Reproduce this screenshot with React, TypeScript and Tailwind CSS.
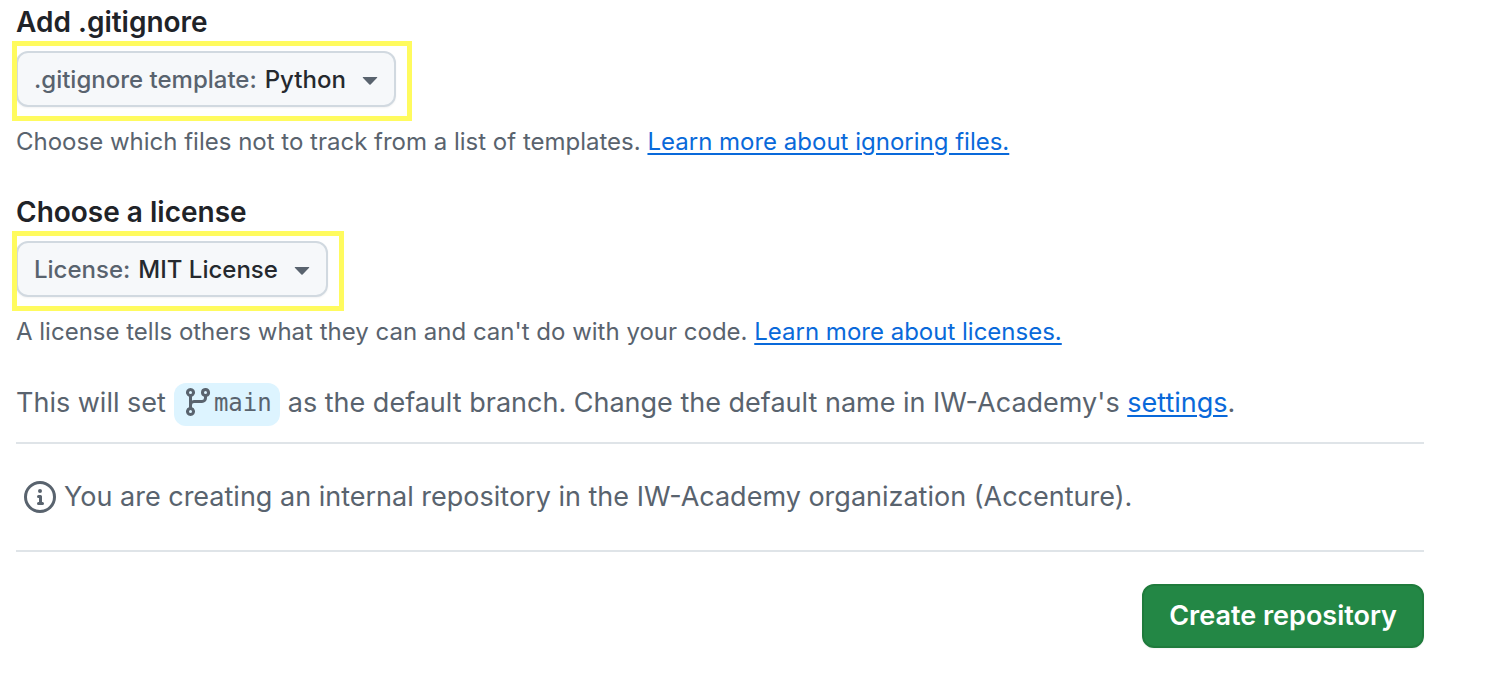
import type { ReactNode } from "react";

function TriangleDownIcon() {
  return (
    <svg viewBox="0 0 16 16" className="pointer-events-none size-8 shrink-0 fill-[#59636e]" aria-hidden="true">
      <path d="m4.427 7.427 3.396 3.396a.25.25 0 0 0 .354 0l3.396-3.396A.25.25 0 0 0 11.396 7H4.604a.25.25 0 0 0-.177.427Z" />
    </svg>
  );
}

function BranchIcon() {
  return (
    <svg viewBox="0 0 16 16" className="mt-[3px] size-8 shrink-0 fill-[#59636e]" aria-hidden="true">
      <path d="M9.5 3.25a2.25 2.25 0 1 1 3 2.122V6A2.5 2.5 0 0 1 10 8.5H6a1 1 0 0 0-1 1v1.128a2.251 2.251 0 1 1-1.5 0V5.372a2.25 2.25 0 1 1 1.5 0v1.836A2.493 2.493 0 0 1 6 7h4a1 1 0 0 0 1-1v-.628A2.25 2.25 0 0 1 9.5 3.25Zm-6 0a.75.75 0 1 0 1.5 0 .75.75 0 0 0-1.5 0Zm8.25-.75a.75.75 0 1 0 0 1.5.75.75 0 0 0 0-1.5ZM4.25 12a.75.75 0 1 0 0 1.5.75.75 0 0 0 0-1.5Z" />
    </svg>
  );
}

function InfoIcon() {
  return (
    <svg viewBox="0 0 16 16" className="size-8 shrink-0 fill-[#59636e]" aria-hidden="true">
      <path d="M0 8a8 8 0 1 1 16 0A8 8 0 0 1 0 8Zm8-6.5a6.5 6.5 0 1 0 0 13 6.5 6.5 0 0 0 0-13ZM6.5 7.75A.75.75 0 0 1 7.25 7h1a.75.75 0 0 1 .75.75v2.75h.25a.75.75 0 0 1 0 1.5h-2a.75.75 0 0 1 0-1.5h.25v-2h-.25a.75.75 0 0 1-.75-.75ZM8 6a1 1 0 1 1 0-2 1 1 0 0 1 0 2Z" />
    </svg>
  );
}

function TextLink({ children }: { children: ReactNode }) {
  return (
    <a href="#" className="text-[#0969da] underline decoration-2 underline-offset-3">
      {children}
    </a>
  );
}

type PickerProps = {
  title: string;
  label: string;
  value: string;
  help: string;
  link: string;
};

function Picker({ title, label, value, help, link }: PickerProps) {
  return (
    <section className="flex flex-col items-start">
      <h2 className="text-[28px] leading-[42px] font-semibold text-[#1f2328]">{title}</h2>
      <div className="relative mt-2">
        <label className="flex h-14 items-center rounded-xl border-2 border-[#d1d9e0] bg-[#f6f8fa] pr-2 pl-4 text-2xl font-medium text-[#59636e] shadow-xs">
          <span className="mr-2 pt-0.5">{label}</span>
          <select className="mr-2 field-sizing-content appearance-none bg-transparent pt-0.5 text-[#25292e] outline-none">
            <option>{value}</option>
          </select>
          <TriangleDownIcon />
        </label>
        <span className="pointer-events-none absolute -top-[10px] -right-4 -bottom-[14px] -left-1 border-5 border-[#fffb5e]" />
      </div>
      <p className="mt-[17px] text-2xl leading-9">
        {help} <TextLink>{link}</TextLink>
      </p>
    </section>
  );
}

export default function App() {
  return (
    <form
      className="flex flex-col bg-white pt-px pr-20 pb-6 pl-4 font-['Inter',sans-serif] text-[#59636e]"
      onSubmit={(event) => event.preventDefault()}
    >
      <div className="flex flex-col gap-[31px]">
        <Picker
          title="Add .gitignore"
          label=".gitignore template:"
          value="Python"
          help="Choose which files not to track from a list of templates."
          link="Learn more about ignoring files."
        />
        <Picker
          title="Choose a license"
          label="License:"
          value="MIT License"
          help="A license tells others what they can and can't do with your code."
          link="Learn more about licenses."
        />
      </div>

      <div className="mt-[33px] flex items-start gap-2 border-b-2 border-[#dfe4e8] pb-4 text-[27px] leading-10">
        <span>This will set</span>
        <span className="flex h-[43px] items-start rounded-xl bg-[#ddf4ff] px-2 font-['DejaVu_Sans_Mono',monospace] text-2xl leading-10">
          <BranchIcon />
          main
        </span>
        <span>
          as the default branch. Change the default name in IW-Academy's <TextLink>settings</TextLink>.
        </span>
      </div>

      <div className="flex items-center gap-2 border-b-2 border-[#dfe4e8] py-8 pl-2 text-[27px] leading-[42px]">
        <InfoIcon />
        <p>You are creating an internal repository in the IW-Academy organization (Accenture).</p>
      </div>

      <button
        type="submit"
        className="mt-8 h-16 self-end rounded-xl border-2 border-[#1f7b3c] bg-[#238745] px-[25px] text-[27px] font-semibold text-white shadow-xs"
      >
        Create repository
      </button>
    </form>
  );
}
